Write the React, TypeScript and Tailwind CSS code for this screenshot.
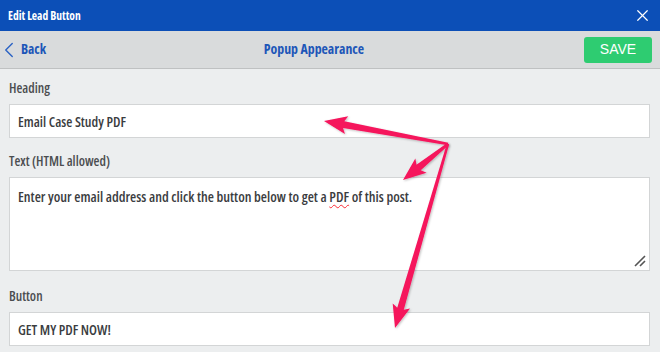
import { X, ChevronLeft } from 'lucide-react'

const arrows = [
  { tip: [324, 121] as const },
  { tip: [403, 180] as const },
  { tip: [395, 328] as const },
]

const pivot = [448, 144] as const

function arrowPoints(tip: readonly [number, number]) {
  const [px, py] = pivot
  const [tx, ty] = tip
  const dx = tx - px
  const dy = ty - py
  const len = Math.hypot(dx, dy)
  const ux = dx / len
  const uy = dy / len
  const nx = -uy
  const ny = ux
  const head = 20
  const headW = 9
  const bx = tx - ux * head
  const by = ty - uy * head
  const s0 = 1.2
  const s1 = 3.4
  const pts = [
    [px + nx * s0, py + ny * s0],
    [bx + nx * s1, by + ny * s1],
    [bx + nx * headW - ux * 3, by + ny * headW - uy * 3],
    [tx, ty],
    [bx - nx * headW - ux * 3, by - ny * headW - uy * 3],
    [bx - nx * s1, by - ny * s1],
    [px - nx * s0, py - ny * s0],
  ]
  return pts.map((p) => p.join(',')).join(' ')
}

function Field({ label, children }: { label: string; children: React.ReactNode }) {
  return (
    <div>
      <p className="text-[13.5px] leading-4 font-semibold text-[#4b4d4f] mb-2">{label}</p>
      {children}
    </div>
  )
}

export default function App() {
  return (
    <div
      className="relative w-[660px] h-[352px] overflow-hidden bg-[#eceeef] font-stretch-condensed"
      style={{ fontFamily: '"Open Sans", "DejaVu Sans Condensed", sans-serif' }}
    >
      {/* Title bar */}
      <div className="h-[31px] bg-[#0c4fb7] flex items-center justify-between pl-2 pr-2">
        <p className="text-[11.5px] font-bold text-white">Edit Lead Button</p>
        <X className="w-[19px] h-[19px] text-white" strokeWidth={1.5} />
      </div>

      {/* Nav bar */}
      <div className="h-[38px] bg-[#d9dbdc] border-b border-[#bfc1c2] flex items-center pr-2">
        <div className="w-[60px] flex items-center">
          <ChevronLeft className="w-[26px] h-[26px] text-[#2a62c4] -ml-[4px]" strokeWidth={1.3} />
          <span className="-ml-[1px] text-[13.5px] font-bold text-[#1d56b8]">Back</span>
        </div>
        <div className="flex-1 text-center text-[13.8px] font-bold text-[#1d56b8]">
          Popup Appearance
        </div>
        <div className="w-[84px] flex justify-end">
          <button
            className="w-[68px] h-[26px] rounded-[3px] bg-[#2ecc71] text-white text-[14px] font-stretch-normal"
            style={{ fontFamily: '"Liberation Sans", Arial, sans-serif' }}
          >
            SAVE
          </button>
        </div>
      </div>

      {/* Form */}
      <div className="pl-[9px] pr-[10px] pt-[11px] flex flex-col gap-4">
        <Field label="Heading">
          <div className="h-[34px] bg-white border border-[#d3d5d6] px-2 flex items-center text-[14px] font-semibold text-[#3b3d3f]">
            Email Case Study PDF
          </div>
        </Field>
        <div className="-mt-[1px]">
          <Field label="Text (HTML allowed)">
            <div className="relative h-[94px] bg-white border border-[#d3d5d6] px-2 pt-[8px] text-[14.2px] font-semibold text-[#3b3d3f]">
              Enter your email address and click the button below to get a{' '}
              <span className="underline decoration-wavy decoration-red-500 decoration-1 underline-offset-2">PDF</span>{' '}
              of this post.
              <svg className="absolute right-[3px] bottom-[3px]" width="12" height="12" viewBox="0 0 12 12">
                <path d="M1 11 L11 1 M6 11 L11 6" stroke="#555" strokeWidth="1.6" />
              </svg>
            </div>
          </Field>
        </div>
        <div className="mt-[1px]">
          <Field label="Button">
            <div className="h-[34px] bg-white border border-[#d3d5d6] px-2 flex items-center text-[14px] font-semibold text-[#3b3d3f]">
              GET MY PDF NOW!
            </div>
          </Field>
        </div>
      </div>

      {/* Annotation arrows */}
      <svg className="absolute inset-0 pointer-events-none" width="660" height="352">
        <defs>
          <filter id="sh" x="-20%" y="-20%" width="140%" height="140%">
            <feDropShadow dx="1" dy="1" stdDeviation="0.8" floodColor="#000" floodOpacity="0.25" />
          </filter>
        </defs>
        {arrows.map((a, i) => (
          <polygon key={i} points={arrowPoints(a.tip)} fill="#f5145c" filter="url(#sh)" />
        ))}
      </svg>
    </div>
  )
}
